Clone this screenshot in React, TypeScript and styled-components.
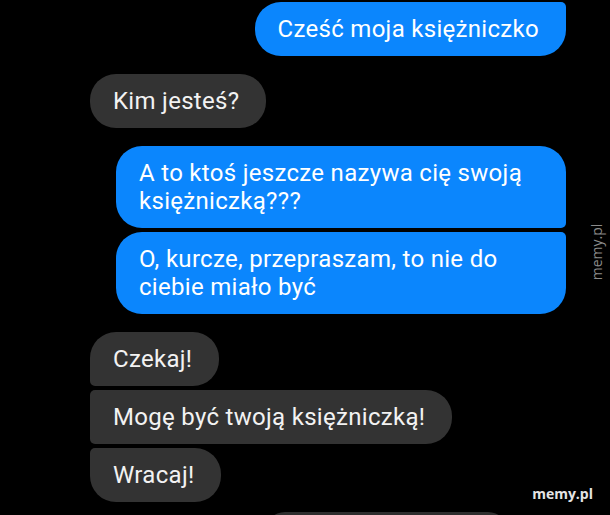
import styled, { createGlobalStyle } from 'styled-components';

type Side = 'mine' | 'theirs';
type Pos = 'single' | 'first' | 'middle' | 'last';

type Message = { text: string; pos: Pos };
type Group = { side: Side; space: number; messages: Message[] };

const GlobalStyle = createGlobalStyle`
  html, body {
    margin: 0;
    padding: 0;
    background: #000;
  }
  body {
    width: 610px;
    height: 515px;
    overflow: hidden;
    font-family: Roboto, 'Noto Sans', sans-serif;
  }
`;

const Screen = styled.div`
  position: relative;
  width: 610px;
  height: 515px;
  overflow: hidden;
  background: #000;
`;

const Thread = styled.div`
  display: flex;
  flex-direction: column;
  padding: 2px 44px 0 90px;
`;

const GroupBox = styled.div<{ $side: Side; $space: number }>`
  display: flex;
  flex-direction: column;
  gap: 4px;
  align-items: ${({ $side }) => ($side === 'mine' ? 'flex-end' : 'flex-start')};
  margin-top: ${({ $space }) => $space}px;
`;

const BIG = 26;
const SMALL = 5;

const corners = (side: Side, pos: Pos) => {
  const top = pos === 'single' || pos === 'first' ? BIG : SMALL;
  const bottom = pos === 'single' || pos === 'last' ? BIG : SMALL;
  // tl tr br bl
  return side === 'mine'
    ? `${BIG}px ${top}px ${bottom}px ${BIG}px`
    : `${top}px ${BIG}px ${BIG}px ${bottom}px`;
};

const Bubble = styled.div<{ $side: Side; $pos: Pos }>`
  box-sizing: border-box;
  max-width: 450px;
  padding: 13px 27px 13px 23px;
  font-size: 24px;
  line-height: 28px;
  letter-spacing: 0.3px;
  color: ${({ $side }) => ($side === 'mine' ? '#ffffff' : '#f2f2f2')};
  background: ${({ $side }) => ($side === 'mine' ? '#0b86fd' : '#333333')};
  border-radius: ${({ $side, $pos }) => corners($side, $pos)};
`;

const NextBubble = styled.div`
  margin: 10px 0 0 175px;
  width: 243px;
  height: 40px;
  border-radius: 20px;
  background: #2e2e2e;
`;

const SideMark = styled.div`
  position: absolute;
  left: 596px;
  top: 252px;
  transform: translate(-50%, -50%) rotate(-90deg);
  font-family: 'Open Sans', 'Liberation Sans', sans-serif;
  font-size: 14px;
  color: #8a8a8a;
  white-space: nowrap;
`;

const CornerMark = styled.div`
  position: absolute;
  right: 17px;
  top: 484px;
  font-family: 'Open Sans', 'Liberation Sans', sans-serif;
  font-weight: 700;
  font-size: 14px;
  color: #e4e4e4;
`;

const groups: Group[] = [
  { side: 'mine', space: 0, messages: [{ text: 'Cześć moja księżniczko', pos: 'last' }] },
  { side: 'theirs', space: 18, messages: [{ text: 'Kim jesteś?', pos: 'single' }] },
  {
    side: 'mine',
    space: 18,
    messages: [
      { text: 'A to ktoś jeszcze nazywa cię swoją księżniczką???', pos: 'first' },
      { text: 'O, kurcze, przepraszam, to nie do ciebie miało być', pos: 'last' },
    ],
  },
  {
    side: 'theirs',
    space: 18,
    messages: [
      { text: 'Czekaj!', pos: 'first' },
      { text: 'Mogę być twoją księżniczką!', pos: 'middle' },
      { text: 'Wracaj!', pos: 'last' },
    ],
  },
];

const App = () => (
  <Screen>
    <GlobalStyle />
    <Thread>
      {groups.map((g, i) => (
        <GroupBox key={i} $side={g.side} $space={g.space}>
          {g.messages.map((m) => (
            <Bubble key={m.text} $side={g.side} $pos={m.pos}>
              {m.text}
            </Bubble>
          ))}
        </GroupBox>
      ))}
      <NextBubble />
    </Thread>
    <SideMark>memy.pl</SideMark>
    <CornerMark>memy.pl</CornerMark>
  </Screen>
);

export default App;
